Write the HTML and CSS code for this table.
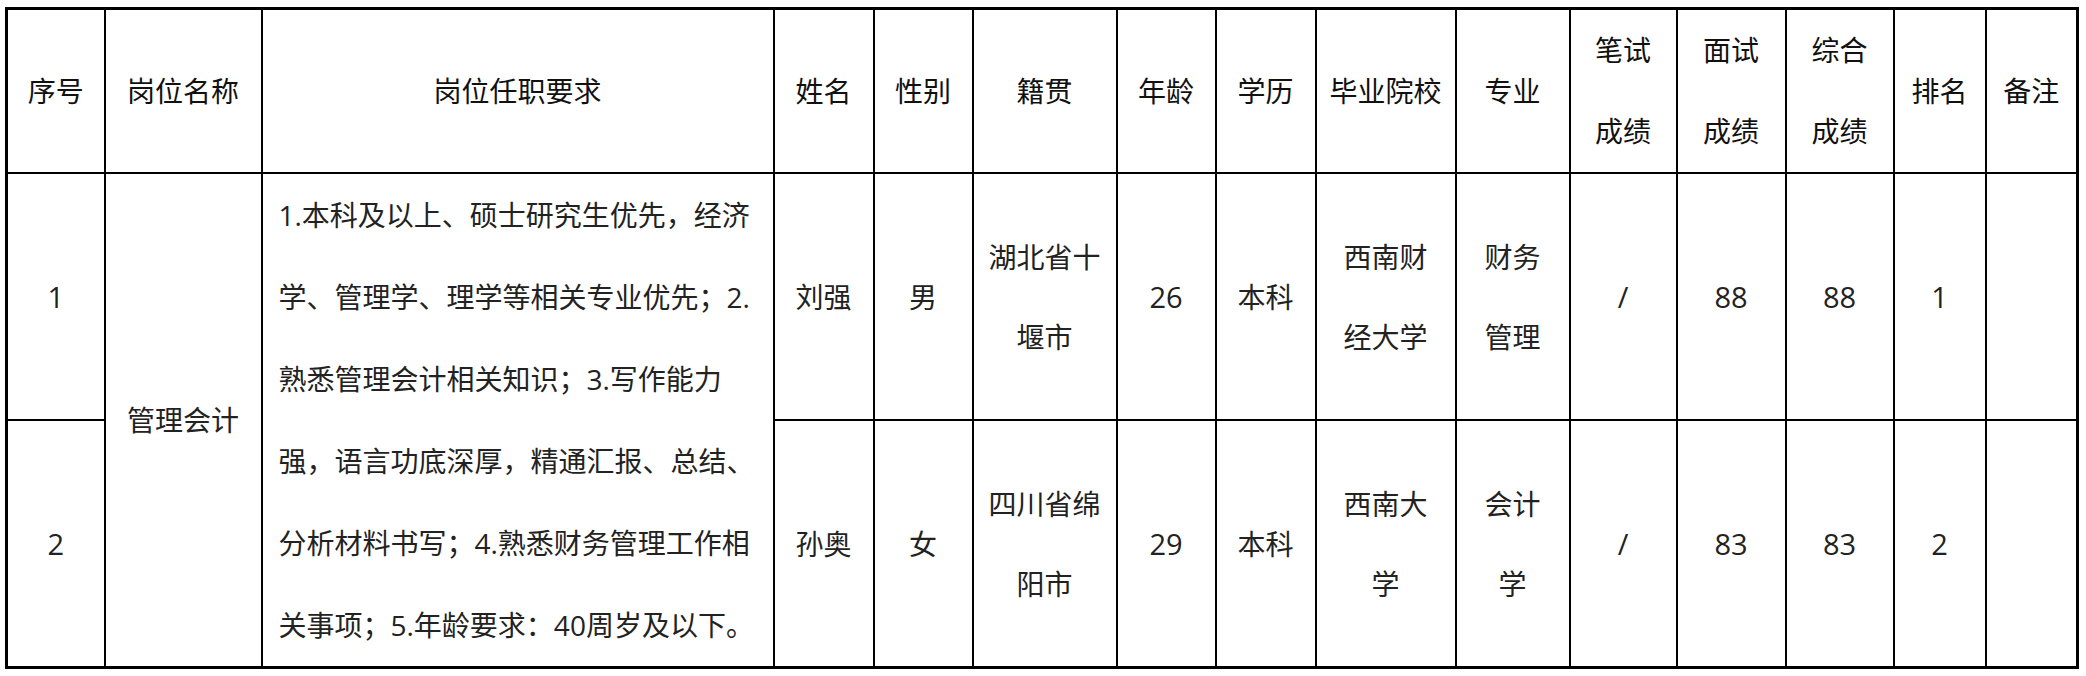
FILE: index.html
```html
<!DOCTYPE html>
<html lang="zh-CN">
<head>
<meta charset="utf-8">
<title>管理会计 岗位成绩</title>
<link rel="stylesheet" href="styles.css">
</head>
<body>
<table class="grid">
  <colgroup>
    <col class="c-no"><col class="c-post"><col class="c-req"><col class="c-name"><col class="c-sex">
    <col class="c-origin"><col class="c-age"><col class="c-edu"><col class="c-school"><col class="c-major">
    <col class="c-written"><col class="c-interview"><col class="c-total"><col class="c-rank"><col class="c-note">
  </colgroup>
  <thead>
    <tr class="head-row">
      <th>序号</th>
      <th>岗位名称</th>
      <th>岗位任职要求</th>
      <th>姓名</th>
      <th>性别</th>
      <th>籍贯</th>
      <th>年龄</th>
      <th>学历</th>
      <th>毕业院校</th>
      <th>专业</th>
      <th class="two">笔试<br>成绩</th>
      <th class="two">面试<br>成绩</th>
      <th class="two">综合<br>成绩</th>
      <th>排名</th>
      <th>备注</th>
    </tr>
  </thead>
  <tbody>
    <tr class="body-row">
      <td class="num">1</td>
      <td rowspan="2">管理会计</td>
      <td rowspan="2" class="req">1.本科及以上、硕士研究生优先，经济学、管理学、理学等相关专业优先；2.熟悉管理会计相关知识；3.写作能力强，语言功底深厚，精通汇报、总结、分析材料书写；4.熟悉财务管理工作相关事项；5.年龄要求：40周岁及以下。</td>
      <td>刘强</td>
      <td>男</td>
      <td class="wrap wrap-origin">湖北省十堰市</td>
      <td class="num">26</td>
      <td>本科</td>
      <td class="wrap wrap-school">西南财经大学</td>
      <td class="wrap wrap-major">财务管理</td>
      <td class="num">/</td>
      <td class="num">88</td>
      <td class="num">88</td>
      <td class="num">1</td>
      <td></td>
    </tr>
    <tr class="body-row">
      <td class="num">2</td>
      <td>孙奥</td>
      <td>女</td>
      <td class="wrap wrap-origin">四川省绵阳市</td>
      <td class="num">29</td>
      <td>本科</td>
      <td class="wrap wrap-school">西南大学</td>
      <td class="wrap wrap-major">会计学</td>
      <td class="num">/</td>
      <td class="num">83</td>
      <td class="num">83</td>
      <td class="num">2</td>
      <td></td>
    </tr>
  </tbody>
</table>
</body>
</html>
```

FILE: styles.css
```css
html, body {
  margin: 0;
  padding: 0;
  background: #ffffff;
}

body {
  padding: 7px 0 0 5px;
  font-family: "Open Sans", "Noto Sans CJK SC", sans-serif;
  color: #222222;
}

.grid {
  border-collapse: collapse;
  table-layout: fixed;
  width: 2073px;
  border: 3px solid #000;
}

.c-no { width: 98px; }
.c-post { width: 157px; }
.c-req { width: 512px; }
.c-name { width: 100px; }
.c-sex { width: 99px; }
.c-origin { width: 144px; }
.c-age { width: 99px; }
.c-edu { width: 100px; }
.c-school { width: 140px; }
.c-major { width: 114px; }
.c-written { width: 107px; }
.c-interview { width: 109px; }
.c-total { width: 108px; }
.c-rank { width: 92px; }
.c-note { width: 92px; }

.grid th,
.grid td {
  border: 2px solid #000;
  padding: 0;
  text-align: center;
  vertical-align: middle;
  font-size: 28px;
  font-weight: 400;
  line-height: 80px;
}

.grid th {
  color: #111111;
  line-height: 81px;
}

.head-row { height: 164px; }
.body-row { height: 247px; }

.grid td.num {
  font-size: 29px;
}

.grid td.req {
  text-align: left;
  line-height: 82px;
  padding: 0 6px 0 16px;
}

.grid td.wrap-origin { padding: 0 8px; }
.grid td.wrap-school { padding: 0 20px; }
.grid td.wrap-major { padding: 0 20px; }
```
